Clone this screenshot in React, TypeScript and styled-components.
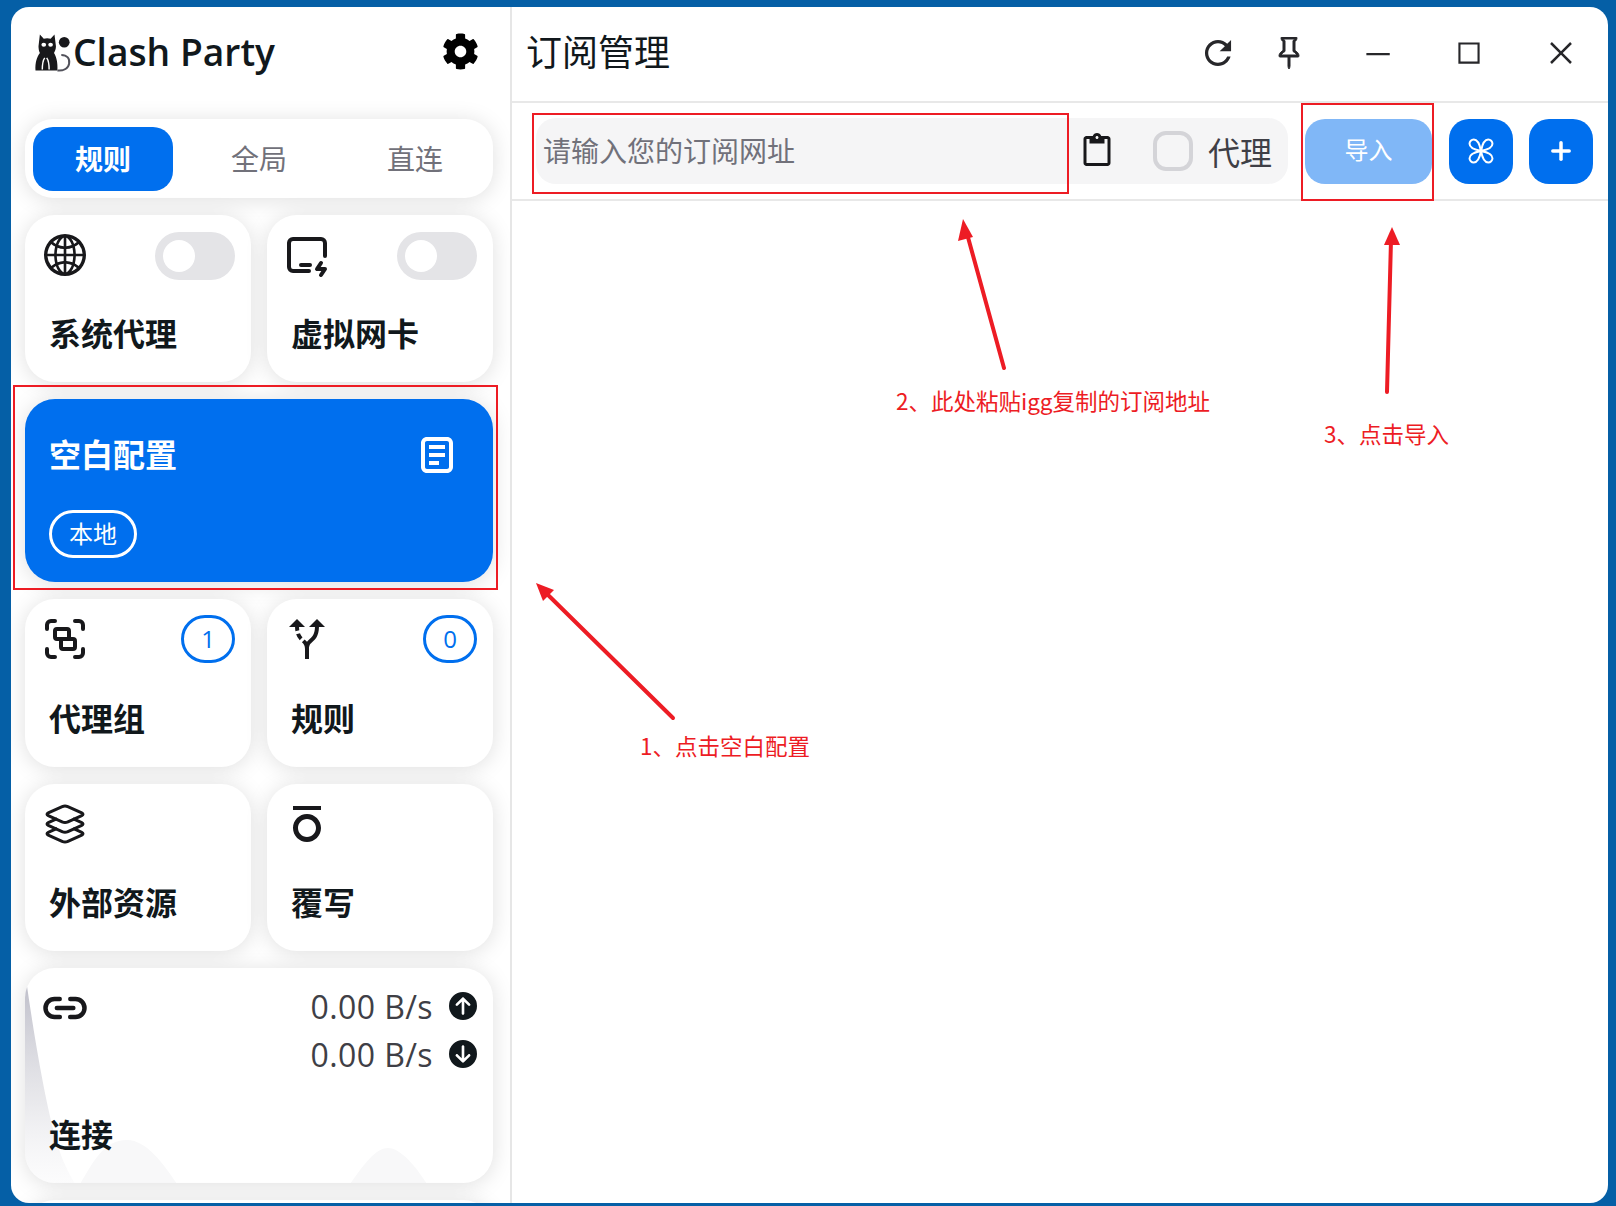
import React from "react"
import styled, {createGlobalStyle} from "styled-components"
import {AiOutlineGlobal} from "react-icons/ai"
import {BsPin} from "react-icons/bs"
import {CgLoadbarDoc} from "react-icons/cg"
import {FaCog} from "react-icons/fa"
import {FaCircleArrowDown, FaCircleArrowUp} from "react-icons/fa6"
import {IoMdRefresh} from "react-icons/io"
import {IoLayersOutline, IoLink} from "react-icons/io5"
import {LuGroup, LuPlus} from "react-icons/lu"
import {MdContentPaste, MdFormatOverline, MdOutlineAltRoute} from "react-icons/md"
import {TbDeviceIpadHorizontalBolt} from "react-icons/tb"
import {VscChromeClose, VscChromeMaximize, VscChromeMinimize} from "react-icons/vsc"

const BLUE = "#006fee"
const INK = "#11181c"
const CJK = `"Noto Sans CJK SC", "Open Sans", sans-serif`

const GlobalStyle = createGlobalStyle`
  html, body {
    margin: 0;
    padding: 0;
    background: #055fa6;
  }
  * {
    box-sizing: border-box;
  }
`

const Desktop = styled.div`
  position: relative;
  width: 1616px;
  height: 1206px;
  padding: 7px 8px 3px 11px;
  background: #055fa6;
  overflow: hidden;
  font-family: ${CJK};
  color: ${INK};
`

const Window = styled.div`
  display: flex;
  height: 100%;
  background: #fff;
  border-radius: 18px;
  overflow: hidden;
`

const Sidebar = styled.aside`
  flex: 0 0 501px;
  height: 100%;
  overflow: hidden;
  border-right: 2px solid #e6e6e6;
`

const Brand = styled.header`
  display: flex;
  align-items: center;
  justify-content: space-between;
  height: 89px;
  padding: 0 31px 0 24px;
  margin-bottom: 23px;
`

const BrandName = styled.div`
  display: flex;
  align-items: center;
  font-family: "Open Sans", sans-serif;
  font-size: 37.2px;
  font-weight: 600;
`

const SettingsIcon = styled(FaCog)`
  font-size: 37px;
  color: #000;
`

const CardColumn = styled.div`
  display: flex;
  flex-direction: column;
  gap: 17px;
  padding: 0 17px 0 14px;
`

const CardRow = styled.div`
  display: grid;
  grid-template-columns: 226px 226px;
  column-gap: 16px;
`

const ModeCard = styled.div`
  display: grid;
  grid-template-columns: 140px 1fr 1fr;
  align-items: center;
  column-gap: 16px;
  height: 79px;
  padding: 0 8px;
  background: #fff;
  border-radius: 28px;
  box-shadow: 0 2px 22px rgba(0, 0, 0, 0.13);
`

const ModeTab = styled.div<{$active?: boolean}>`
  display: flex;
  align-items: center;
  justify-content: center;
  height: 64px;
  padding-bottom: 2px;
  border-radius: 20px;
  font-size: 28px;
  font-weight: ${(p) => (p.$active ? 700 : 400)};
  color: ${(p) => (p.$active ? "#fff" : "#71717a")};
  background: ${(p) => (p.$active ? BLUE : "transparent")};
`

const Card = styled.section<{$height: number; $active?: boolean}>`
  position: relative;
  display: flex;
  flex-direction: column;
  justify-content: space-between;
  height: ${(p) => p.$height}px;
  background: ${(p) => (p.$active ? BLUE : "#fff")};
  color: ${(p) => (p.$active ? "#fff" : INK)};
  border-radius: 30px;
  box-shadow: 0 2px 22px rgba(0, 0, 0, 0.13);
  overflow: hidden;
`

const CardTop = styled.div`
  position: relative;
  display: flex;
  align-items: flex-start;
  justify-content: space-between;
  padding: 16px 16px 0 16px;
`

const CardIcon = styled.span`
  display: flex;
  align-items: center;
  justify-content: center;
  width: 48px;
  height: 48px;
  font-size: 48px;
  color: #18181b;
`

const CardLabel = styled.div`
  position: relative;
  padding: 0 24px 28px;
  font-size: 32px;
  line-height: 44px;
  font-weight: 700;
`

const Toggle = styled.span`
  display: flex;
  align-items: center;
  width: 80px;
  height: 48px;
  margin-top: 1px;
  padding-left: 8px;
  border-radius: 24px;
  background: #e4e4e7;
`

const ToggleKnob = styled.span`
  width: 32px;
  height: 32px;
  border-radius: 50%;
  background: #fff;
`

const CountBadge = styled.span`
  display: flex;
  align-items: center;
  justify-content: center;
  width: 54px;
  height: 48px;
  padding-bottom: 2px;
  border: 3px solid ${BLUE};
  border-radius: 24px;
  font-family: "Open Sans", sans-serif;
  font-size: 24px;
  color: ${BLUE};
`

const ProfileTop = styled.div`
  display: flex;
  align-items: center;
  justify-content: space-between;
  padding: 28px 32px 0 24px;
  font-size: 32px;
  line-height: 44px;
  font-weight: 700;
`

const ProfileDoc = styled(CgLoadbarDoc)`
  font-size: 48px;
  margin-top: 4px;
`

const ProfileTag = styled.span`
  align-self: flex-start;
  display: flex;
  align-items: center;
  justify-content: center;
  width: 88px;
  height: 48px;
  margin: 0 0 24px 24px;
  padding-bottom: 3px;
  border: 3px solid #fff;
  border-radius: 24px;
  font-size: 24px;
`

const SpeedList = styled.div`
  display: flex;
  flex-direction: column;
  gap: 4px;
  margin-top: 0;
`

const SpeedRow = styled.div`
  display: flex;
  align-items: center;
  justify-content: flex-end;
  gap: 16px;
  height: 44px;
  font-family: "Open Sans", sans-serif;
  font-size: 32px;
  letter-spacing: 0.4px;
  color: #3f3f46;
  svg {
    font-size: 28px;
    color: #11181c;
  }
`

const TrafficChart = styled.svg`
  position: absolute;
  left: 0;
  top: 0;
`

const Main = styled.main`
  flex: 1;
  min-width: 0;
  display: flex;
  flex-direction: column;
`

const TitleBar = styled.header`
  display: flex;
  align-items: center;
  justify-content: space-between;
  height: 96px;
  padding: 0 1px 0 15px;
  border-bottom: 2px solid #e8e8e8;
`

const PageTitle = styled.h1`
  margin: -8px 0 0 -1px;
  font-size: 36px;
  font-weight: 400;
`

const TitleActions = styled.div`
  display: flex;
  align-items: center;
  margin-top: -2px;
`

const TitleButton = styled.span<{$width: number; $size?: number}>`
  display: flex;
  align-items: center;
  justify-content: center;
  width: ${(p) => p.$width}px;
  height: 48px;
  font-size: ${(p) => p.$size ?? 36}px;
  color: #27272a;
`

const PinIcon = styled(BsPin)`
  stroke: currentColor;
  stroke-width: 0.5px;
`

const Toolbar = styled.div`
  display: flex;
  align-items: center;
  height: 98px;
  padding: 0 12px 0 24px;
  border-bottom: 2px solid #e8e8e8;
`

const InputGroup = styled.div`
  display: flex;
  align-items: center;
  width: 752px;
  height: 66px;
  margin-right: 17px;
  background: #f5f5f6;
  border-radius: 20px;
`

const UrlField = styled.div`
  flex: 1;
  padding: 0 0 2px 7px;
  font-size: 28px;
  color: #71717a;
`

const PasteIcon = styled(MdContentPaste)`
  font-size: 36px;
  margin-right: 38px;
  color: #18181b;
`

const ProxyCheck = styled.span`
  width: 40px;
  height: 40px;
  margin-right: 15px;
  border: 4px solid #d4d4d8;
  border-radius: 13px;
`

const ProxyLabel = styled.span`
  margin-right: 16px;
  font-size: 32px;
  color: #3f3f46;
`

const ImportButton = styled.div`
  display: flex;
  align-items: center;
  justify-content: center;
  width: 127px;
  height: 65px;
  margin-right: 17px;
  padding-bottom: 5px;
  font-size: 24px;
  color: #fff;
  background: #80b7f7;
  border-radius: 20px;
`

const SquareButton = styled.div`
  display: flex;
  align-items: center;
  justify-content: center;
  width: 64px;
  height: 65px;
  margin-right: 16px;
  color: #fff;
  background: ${BLUE};
  border-radius: 20px;
  &:last-child {
    margin-right: 0;
  }
`

const RedBox = styled.div<{$x: number; $y: number; $w: number; $h: number}>`
  position: absolute;
  left: ${(p) => p.$x}px;
  top: ${(p) => p.$y}px;
  width: ${(p) => p.$w}px;
  height: ${(p) => p.$h}px;
  border: 2px solid #ed1c24;
`

const Arrows = styled.svg`
  position: absolute;
  left: 0;
  top: 0;
  pointer-events: none;
`

const Note = styled.div<{$x: number; $y: number}>`
  position: absolute;
  left: ${(p) => p.$x}px;
  top: ${(p) => p.$y}px;
  font-size: 22.5px;
  line-height: 32px;
  color: #ed1c24;
  white-space: nowrap;
`

function CatLogo() {
  return (
    <svg width="38" height="42" viewBox="0 0 39 42">
      <path
        d="M5 3 L9 7.5 C11 6.7 14 6.7 16 7.5 L20 3 L21.5 15 C21.5 18 20.5 20 19.5 22 C22 26 23.5 32 23 40 L0.5 40 C0 32 2 26 5 22 C4 20 3.6 17 3.6 15 Z"
        fill="#18181b"
      />
      <ellipse cx="9" cy="13.5" rx="2.4" ry="2" fill="#fff" />
      <ellipse cx="16" cy="13.5" rx="2.4" ry="2" fill="#fff" />
      <path d="M7.5 39 C7.5 33 8.5 29 10 27 M14.5 39 C14.5 33 13.5 29 12 27" stroke="#fff" strokeWidth="1.5" fill="none" />
      <circle cx="30" cy="11" r="5.5" fill="#18181b" />
      <path d="M27 24 C33 24 36 28 35 33 C34 38 29 40.5 23 40" stroke="#52525b" strokeWidth="2" fill="none" />
    </svg>
  )
}

function CloverIcon() {
  const petal = "M12 12 C8.8 11.4 3.4 10.4 3.4 6.6 A3.2 3.2 0 0 1 6.6 3.4 C10.4 3.4 11.4 8.8 12 12 Z"
  return (
    <svg width="32" height="32" viewBox="0 0 24 24" fill="none" stroke="currentColor" strokeWidth="1.5">
      {[0, 90, 180, 270].map((angle) => (
        <path key={angle} d={petal} transform={`rotate(${angle} 12 12)`} />
      ))}
    </svg>
  )
}

function ConnectionChart() {
  return (
    <TrafficChart width="468" height="216" viewBox="0 0 468 216">
      <defs>
        <linearGradient id="trafficFill" x1="0" y1="0" x2="0" y2="1">
          <stop offset="0" stopColor="#a9a9b8" stopOpacity="0.75" />
          <stop offset="0.6" stopColor="#c9c9d1" stopOpacity="0.4" />
          <stop offset="1" stopColor="#f0f0f3" stopOpacity="0.2" />
        </linearGradient>
      </defs>
      <path d="M0 216 L0 15 L2 18 C8 60 20 135 32 175 C38 195 44 205 50 216 Z" fill="url(#trafficFill)" />
      <path d="M55 216 C68 195 78 172 102 172 C122 172 140 198 152 216 Z" fill="#f8f8f9" />
      <path d="M325 216 C338 198 350 180 363 180 C376 180 392 200 402 216 Z" fill="#f8f8f9" />
    </TrafficChart>
  )
}

function ToggleCard({icon, label}: {icon: React.ReactNode; label: string}) {
  return (
    <Card $height={167}>
      <CardTop>
        <CardIcon>{icon}</CardIcon>
        <Toggle>
          <ToggleKnob />
        </Toggle>
      </CardTop>
      <CardLabel>{label}</CardLabel>
    </Card>
  )
}

function NavCard({icon, label, count}: {icon: React.ReactNode; label: string; count?: number}) {
  return (
    <Card $height={167.5}>
      <CardTop>
        <CardIcon>{icon}</CardIcon>
        {count !== undefined && <CountBadge>{count}</CountBadge>}
      </CardTop>
      <CardLabel>{label}</CardLabel>
    </Card>
  )
}

export default function App() {
  return (
    <Desktop>
      <GlobalStyle />
      <Window>
        <Sidebar>
          <Brand>
            <BrandName>
              <CatLogo />
              Clash Party
            </BrandName>
            <SettingsIcon />
          </Brand>
          <CardColumn>
            <ModeCard>
              <ModeTab $active>规则</ModeTab>
              <ModeTab>全局</ModeTab>
              <ModeTab>直连</ModeTab>
            </ModeCard>
            <CardRow>
              <ToggleCard icon={<AiOutlineGlobal />} label="系统代理" />
              <ToggleCard icon={<TbDeviceIpadHorizontalBolt />} label="虚拟网卡" />
            </CardRow>
            <Card $height={183} $active>
              <ProfileTop>
                空白配置
                <ProfileDoc />
              </ProfileTop>
              <ProfileTag>本地</ProfileTag>
            </Card>
            <CardRow>
              <NavCard icon={<LuGroup />} label="代理组" count={1} />
              <NavCard icon={<MdOutlineAltRoute />} label="规则" count={0} />
            </CardRow>
            <CardRow>
              <NavCard icon={<IoLayersOutline />} label="外部资源" />
              <NavCard icon={<MdFormatOverline />} label="覆写" />
            </CardRow>
            <Card $height={215}>
              <ConnectionChart />
              <CardTop>
                <CardIcon>
                  <IoLink />
                </CardIcon>
                <SpeedList>
                  <SpeedRow>
                    0.00 B/s
                    <FaCircleArrowUp />
                  </SpeedRow>
                  <SpeedRow>
                    0.00 B/s
                    <FaCircleArrowDown />
                  </SpeedRow>
                </SpeedList>
              </CardTop>
              <CardLabel>连接</CardLabel>
            </Card>
            <Card $height={168} />
          </CardColumn>
        </Sidebar>
        <Main>
          <TitleBar>
            <PageTitle>订阅管理</PageTitle>
            <TitleActions>
              <TitleButton $width={57} $size={38}>
                <IoMdRefresh />
              </TitleButton>
              <TitleButton $width={85} $size={32}>
                <PinIcon />
              </TitleButton>
              <TitleButton $width={92} $size={34}>
                <VscChromeMinimize />
              </TitleButton>
              <TitleButton $width={92} $size={34}>
                <VscChromeMaximize />
              </TitleButton>
              <TitleButton $width={92} $size={32}>
                <VscChromeClose />
              </TitleButton>
            </TitleActions>
          </TitleBar>
          <Toolbar>
            <InputGroup>
              <UrlField>请输入您的订阅网址</UrlField>
              <PasteIcon />
              <ProxyCheck />
              <ProxyLabel>代理</ProxyLabel>
            </InputGroup>
            <ImportButton>导入</ImportButton>
            <SquareButton>
              <CloverIcon />
            </SquareButton>
            <SquareButton>
              <LuPlus size={28} strokeWidth={3} />
            </SquareButton>
          </Toolbar>
        </Main>
      </Window>

      <RedBox $x={13} $y={385} $w={485} $h={205} />
      <RedBox $x={532} $y={113} $w={537} $h={81} />
      <RedBox $x={1301} $y={103} $w={133} $h={98} />
      <Arrows width="1616" height="1206" viewBox="0 0 1616 1206">
        <g stroke="#ed1c24" strokeWidth="4" fill="#ed1c24" strokeLinecap="round">
          <line x1="673" y1="718" x2="544" y2="591" />
          <polygon stroke="none" points="536,583 554,590 543,601" />
          <line x1="1004" y1="368" x2="966" y2="230" />
          <polygon stroke="none" points="963,219 973,237 958,241" />
          <line x1="1387" y1="392" x2="1391" y2="240" />
          <polygon stroke="none" points="1392,227 1400,245 1384,245" />
        </g>
      </Arrows>
      <Note $x={640} $y={729}>1、点击空白配置</Note>
      <Note $x={896} $y={384}>2、此处粘贴igg复制的订阅地址</Note>
      <Note $x={1324} $y={417}>3、点击导入</Note>
    </Desktop>
  )
}
